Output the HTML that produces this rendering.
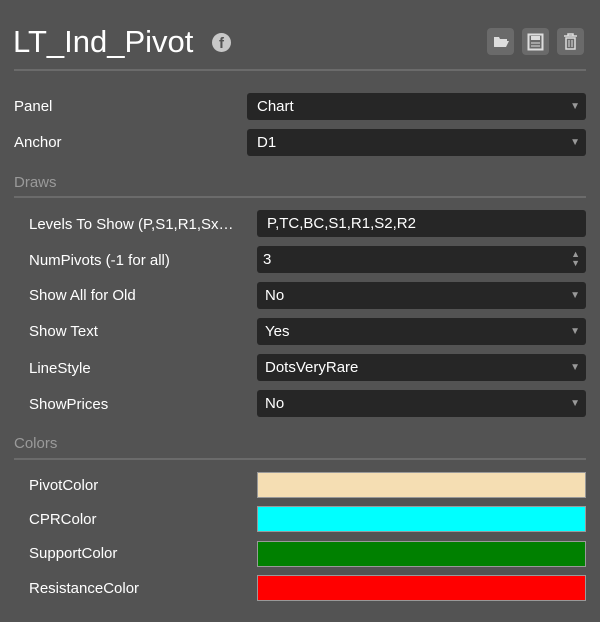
<html><head><style>
body{margin:0;width:600px;height:622px;background:#535353;font-family:"Liberation Sans",sans-serif;position:relative;overflow:hidden;color:#fff}
.a{position:absolute}
.l{position:absolute;font-size:15px;color:#fff}
.b{position:absolute;left:247px;width:339px;height:27px;background:#262626;border-radius:3px;font-size:15px;line-height:27px;box-sizing:border-box;padding-left:10px}
.b2{left:257px;width:329px}
.ar{position:absolute;right:6px;top:0;font-size:10px;color:#999}
.hr{position:absolute;left:14px;width:572px;height:2px;background:#6b6b6b}
.sec{position:absolute;left:14px;font-size:15px;color:#9a9a9a}
.c{position:absolute;left:257px;width:329px;height:26px;box-sizing:border-box;border:1px solid #999}
.ib{position:absolute;top:28px;width:27px;height:27px;background:#6a6a6a;border-radius:4px}
</style></head><body>
<div class="a" style="left:13px;top:24px;font-size:31px">LT_Ind_Pivot</div>
<div class="a" style="left:212px;top:33px;width:19px;height:19px;border-radius:50%;background:#c8c8c8;color:#535353;font-weight:bold;font-size:15px;text-align:center;line-height:21px">f</div>
<div class="ib" style="left:487px"><svg width="27" height="27"><path d="M7 9h5l1 2h7v2H10l-3 6z" fill="#ddd"/><path d="M9 13h13l-3 6H7z" fill="#ddd"/></svg></div>
<div class="ib" style="left:522px"><svg width="27" height="27"><rect x="6.5" y="6.5" width="14" height="15" fill="none" stroke="#ddd" stroke-width="2"/><rect x="9" y="8" width="9" height="4" fill="#ddd"/><path d="M9 15h9M9 18h9" stroke="#ddd"/></svg></div>
<div class="ib" style="left:557px"><svg width="27" height="27"><path d="M7 8h13M11 8V6h5v2" stroke="#ddd" stroke-width="1.5" fill="none"/><rect x="9" y="10" width="9" height="11" fill="none" stroke="#ddd" stroke-width="1.5"/><path d="M12 12v7M15 12v7" stroke="#ddd"/></svg></div>
<div class="hr" style="top:69px"></div>
<div class="l" style="left:14px;top:98px">Panel</div>
<div class="b" style="top:93px">Chart<span class="ar" style="line-height:27px">▼</span></div>
<div class="l" style="left:14px;top:134px">Anchor</div>
<div class="b" style="top:129px">D1<span class="ar" style="line-height:27px">▼</span></div>
<div class="sec" style="top:174px">Draws</div>
<div class="hr" style="top:196px"></div>
<div class="l" style="left:29px;top:216px">Levels To Show (P,S1,R1,Sx…</div>
<div class="b b2" style="top:210px">P,TC,BC,S1,R1,S2,R2</div>
<div class="l" style="left:29px;top:252px">NumPivots (-1 for all)</div>
<div class="b b2" style="top:246px;padding-left:6px">3<span class="ar" style="line-height:9px;top:4px;font-size:9px">▲<br>▼</span></div>
<div class="l" style="left:29px;top:287px">Show All for Old</div>
<div class="b b2" style="top:282px;padding-left:8px">No<span class="ar" style="line-height:27px">▼</span></div>
<div class="l" style="left:29px;top:323px">Show Text</div>
<div class="b b2" style="top:318px;padding-left:8px">Yes<span class="ar" style="line-height:27px">▼</span></div>
<div class="l" style="left:29px;top:360px">LineStyle</div>
<div class="b b2" style="top:354px;padding-left:8px">DotsVeryRare<span class="ar" style="line-height:27px">▼</span></div>
<div class="l" style="left:29px;top:396px">ShowPrices</div>
<div class="b b2" style="top:390px;padding-left:8px">No<span class="ar" style="line-height:27px">▼</span></div>
<div class="sec" style="top:435px">Colors</div>
<div class="hr" style="top:458px"></div>
<div class="l" style="left:29px;top:477px">PivotColor</div>
<div class="c" style="top:472px;background:#f5deb3"></div>
<div class="l" style="left:29px;top:511px">CPRColor</div>
<div class="c" style="top:506px;background:#0ff"></div>
<div class="l" style="left:29px;top:545px">SupportColor</div>
<div class="c" style="top:541px;background:#008000"></div>
<div class="l" style="left:29px;top:580px">ResistanceColor</div>
<div class="c" style="top:575px;background:#f00"></div>
</body></html>
